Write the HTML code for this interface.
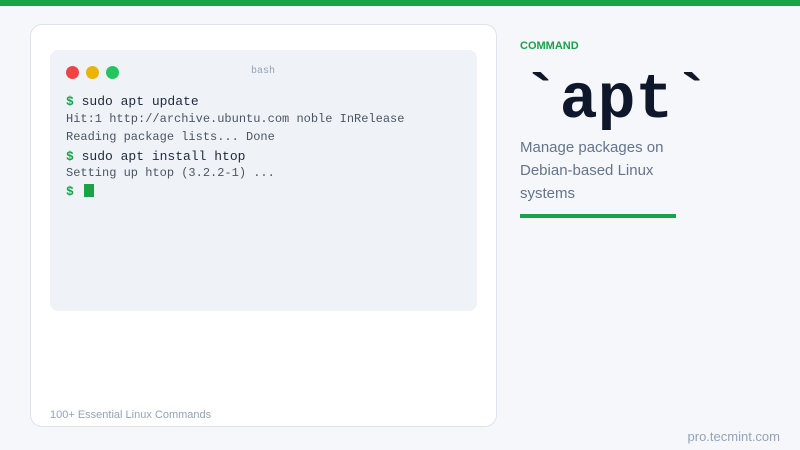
<!DOCTYPE html>
<html><head><style>
body{margin:0;width:800px;height:450px;background:#f5f7fb;position:relative;overflow:hidden;font-family:"Liberation Sans",sans-serif}
.top{position:absolute;left:0;top:0;width:800px;height:6px;background:#16a34a}
.card{position:absolute;left:30px;top:24px;width:467px;height:403px;background:#fff;border:1px solid #dde3ec;border-radius:12px;box-sizing:border-box}
.term{position:absolute;left:50px;top:50px;width:427px;height:261px;background:#eff3f8;border-radius:8px}
.dot{position:absolute;top:66px;width:13px;height:13px;border-radius:50%}
.mono{font-family:"Liberation Mono",monospace;position:absolute;white-space:pre}
.cmd{font-size:13px;color:#1e293b}
.out{font-size:12px;color:#4b5563}
.g{color:#16a34a;font-weight:bold}
</style></head><body>
<div class="top"></div>
<div class="card"></div>
<div class="term"></div>
<div class="dot" style="left:66px;background:#ef4444"></div>
<div class="dot" style="left:86px;background:#eab308"></div>
<div class="dot" style="left:106px;background:#22c55e"></div>
<div class="mono" style="left:251px;top:66px;font-size:10px;color:#94a3b8">bash</div>
<div class="mono cmd" style="left:66px;top:94px"><span class="g">$</span> sudo apt update</div>
<div class="mono out" style="left:66px;top:112px">Hit:1 http://archive.ubuntu.com noble InRelease</div>
<div class="mono out" style="left:66px;top:130px">Reading package lists... Done</div>
<div class="mono cmd" style="left:66px;top:149px"><span class="g">$</span> sudo apt install htop</div>
<div class="mono out" style="left:66px;top:166px">Setting up htop (3.2.2-1) ...</div>
<div class="mono cmd" style="left:66px;top:184px"><span class="g">$</span></div>
<div style="position:absolute;left:84px;top:184px;width:10px;height:13px;background:#16a34a"></div>
<div style="position:absolute;left:50px;top:409px;font-size:11px;color:#94a3b8">100+ Essential Linux Commands</div>
<div style="position:absolute;left:520px;top:40px;font-size:11px;font-weight:bold;color:#16a34a">COMMAND</div>
<div class="mono" style="left:522px;top:61px;font-size:63px;font-weight:bold;color:#0f172a;line-height:80px">`apt`</div>
<div style="position:absolute;left:520px;top:136px;width:170px;font-size:15px;line-height:23px;color:#64748b">Manage packages on Debian-based Linux systems</div>
<div style="position:absolute;left:520px;top:214px;width:156px;height:4px;background:#16a34a"></div>
<div style="position:absolute;right:20px;top:429px;font-size:13px;color:#94a3b8">pro.tecmint.com</div>
</body></html>
